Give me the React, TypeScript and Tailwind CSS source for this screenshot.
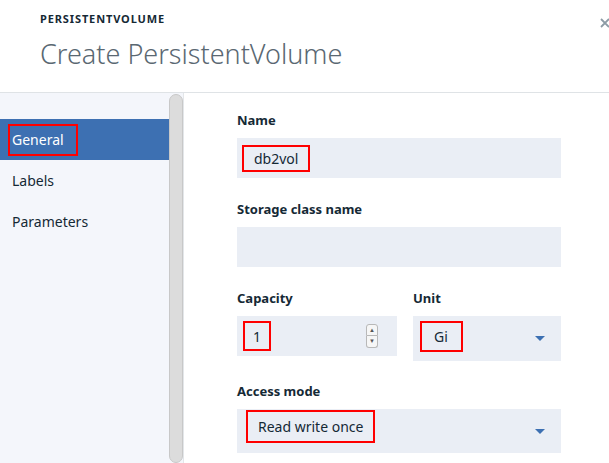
import { useState } from "react"

const font = { fontFamily: '"Noto Sans", "Open Sans", sans-serif' }

function Caret() {
    return (
        <svg width="10" height="5" viewBox="0 0 10 5" className="shrink-0">
            <path d="M0 0h10L5 5z" fill="#3d70b2" />
        </svg>
    )
}

function Marked({ children, className }: { children: React.ReactNode; className: string }) {
    return <span className={"border-2 border-[#ff0000] flex items-center " + className}>{children}</span>
}

export default function App() {
    const [active] = useState("General")
    const nav = ["General", "Labels", "Parameters"]

    return (
        <div className="relative w-[609px] h-[463px] overflow-hidden bg-white text-[#152935]" style={font}>
            <header className="h-[93px] border-b border-[#dfe3e6] pl-10 pt-[11px]">
                <p className="text-[11px] font-bold tracking-[0.08em] leading-[16px] text-[#152935]">PERSISTENTVOLUME</p>
                <h1 className="mt-[10px] text-[27px] font-light leading-[34px] text-[#5a6872]">Create PersistentVolume</h1>
            </header>
            <button aria-label="Close" className="absolute left-[600px] top-[18px]">
                <svg width="10" height="10" viewBox="0 0 10 10">
                    <path d="M1 1l8 8M9 1L1 9" stroke="#8c9ba5" strokeWidth="1.8" />
                </svg>
            </button>

            <div className="flex h-[370px]">
                <nav className="w-[169px] bg-[#f4f6fb] pt-[26px]">
                    {nav.map((item) => (
                        <div
                            key={item}
                            className={
                                "h-[41px] flex items-center pl-[12px] text-[14px] " +
                                (item === active ? "bg-[#3d70b2] text-white" : "text-[#152935]")
                            }
                        >
                            {item === active ? (
                                <Marked className="-ml-[4px] pl-[2px] pr-[12px] h-[32px]">{item}</Marked>
                            ) : (
                                item
                            )}
                        </div>
                    ))}
                </nav>
                <div className="w-[14px] bg-[#f4f6fb] pt-[1px]">
                    <div className="h-full rounded-full bg-[#dcdcdc] border border-[#c8c8c8]" />
                </div>
                <div className="w-px bg-[#e3e6e9]" />

                <main className="flex-1 pl-[53px] pt-[18px] text-[14px]">
                    <div className="w-[324px]">
                        <label className="block text-[13px] font-bold leading-[18px]">Name</label>
                        <div className="mt-[9px] h-[40px] bg-[#eaeef5] flex items-center pl-[5px]">
                            <Marked className="h-[27px] px-[10px]">db2vol</Marked>
                        </div>

                        <label className="block mt-[22px] text-[13px] font-bold leading-[18px]">Storage class name</label>
                        <div className="mt-[9px] h-[40px] bg-[#eaeef5]" />

                        <div className="flex gap-4 mt-[22px]">
                            <div className="w-[160px]">
                                <label className="block text-[13px] font-bold leading-[18px]">Capacity</label>
                                <div className="mt-[9px] h-[40px] bg-[#eaeef5] flex items-center pl-[6px] pr-[19px]">
                                    <Marked className="h-[30px] px-[8px]">1</Marked>
                                    <div className="ml-auto flex flex-col">
                                        <span className="w-[12px] h-[12px] border border-[#b8b8b8] rounded-t-[3px] bg-[#f6f6f6] text-[6px] leading-[10px] text-center text-[#555]">▲</span>
                                        <span className="w-[12px] h-[12px] border border-t-0 border-[#b8b8b8] rounded-b-[3px] bg-[#f6f6f6] text-[6px] leading-[11px] text-center text-[#555]">▼</span>
                                    </div>
                                </div>
                            </div>
                            <div className="flex-1">
                                <label className="block text-[13px] font-bold leading-[18px]">Unit</label>
                                <div className="mt-[9px] h-[45px] bg-[#eaeef5] flex items-center pl-[7px] pr-[16px]">
                                    <Marked className="h-[31px] w-[43px] pl-[12px] -mt-[4px]">Gi</Marked>
                                    <span className="ml-auto"><Caret /></span>
                                </div>
                            </div>
                        </div>

                        <label className="block mt-[21px] text-[13px] font-bold leading-[18px]">Access mode</label>
                        <div className="mt-[9px] h-[44px] bg-[#eaeef5] flex items-center pl-[9px] pr-[16px]">
                            <Marked className="h-[33px] px-[10px] -mt-[9px]">Read write once</Marked>
                            <span className="ml-auto"><Caret /></span>
                        </div>
                    </div>
                </main>
            </div>
        </div>
    )
}
